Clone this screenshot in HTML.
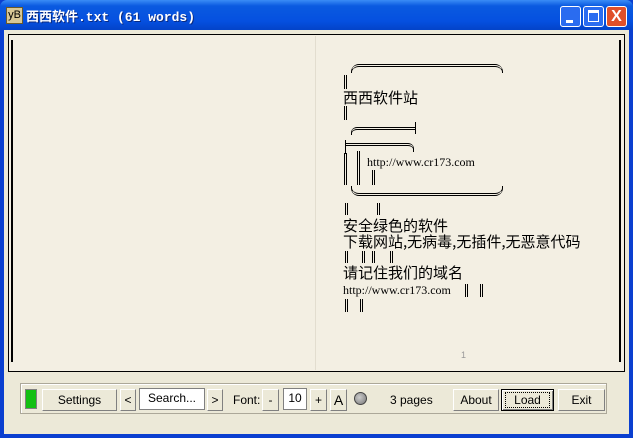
<!DOCTYPE html>
<html><head><meta charset="utf-8"><style>
*{margin:0;padding:0;box-sizing:border-box}
body{width:633px;height:438px;overflow:hidden;background:#0a3fd0;font-family:"Liberation Sans","Noto Sans CJK SC",sans-serif;position:relative}
.a{position:absolute}
.title{left:0;top:0;width:633px;height:30px;background:linear-gradient(#3a8cf6,#0a5ae0 20%,#0550e0 70%,#0343c8);border-radius:7px 7px 0 0}
.client{left:4px;top:30px;width:625px;height:404px;background:#ece9d8}
.book{left:8px;top:34px;width:617px;height:338px;border:1px solid #000;background:#f3efe3}
.cjk{font-family:"Noto Sans CJK SC","WenQuanYi Zen Hei",sans-serif;font-size:15px;line-height:15px;color:#000}
.ser{font-family:"Liberation Serif",serif;font-size:12px;color:#000}
.v{position:absolute;width:3px;border-left:1px solid #000;border-right:1px solid #000}
.btn{position:absolute;background:#ece9d8;border:1px solid;border-color:#fff #808080 #808080 #fff;font-size:12px;text-align:center;line-height:20px;height:22px;color:#000}
</style></head><body>
<div class="a title"></div>
<div class="a" style="left:6px;top:7px;width:17px;height:17px;background:#d8c896;border:1px solid #6b5a2a;font-size:11px;line-height:15px;text-align:center;color:#000">yB</div>
<div class="a" style="left:26px;top:6px;color:#fff;font-family:'Liberation Mono','Noto Sans CJK SC',monospace;font-weight:bold;font-size:13px;text-shadow:1px 1px #0a2a80">西西软件.txt (61 words)</div>
<div class="a" style="left:560px;top:6px;width:21px;height:21px;background:#2a6cf0;border:1px solid #fff;border-radius:3px"><div class="a" style="left:5px;top:13px;width:7px;height:3px;background:#fff"></div></div>
<div class="a" style="left:583px;top:6px;width:21px;height:21px;background:#2a6cf0;border:1px solid #fff;border-radius:3px"><div class="a" style="left:4px;top:3px;width:11px;height:12px;border:1px solid #fff;border-top-width:3px"></div></div>
<div class="a" style="left:606px;top:6px;width:21px;height:21px;background:#e0502a;border:1px solid #fff;border-radius:3px;color:#fff;font-weight:bold;font-size:16px;line-height:19px;text-align:center">X</div>
<div class="a client"></div>
<div class="a book"></div>
<div class="a" style="left:11px;top:40px;width:2px;height:322px;background:#000"></div>
<div class="a" style="left:619px;top:40px;width:2px;height:322px;background:#000"></div>
<div class="a" style="left:315px;top:36px;width:1px;height:334px;background:#e2ddcf"></div>
<!-- top box: top line with curls -->
<div class="a" style="left:351px;top:64px;width:152px;height:9px;border-top:3px double #000;border-left:1px solid #000;border-right:1px solid #000;border-radius:8px 8px 0 0"></div>
<div class="v" style="left:344px;top:75px;height:14px"></div>
<div class="a cjk" style="left:343px;top:90px">西西软件站</div>
<div class="v" style="left:344px;top:106px;height:14px"></div>
<div class="a" style="left:351px;top:127px;width:65px;height:8px;border-top:3px double #000;border-left:1px solid #000;border-radius:6px 0 0 0"></div>
<div class="a" style="left:415px;top:122px;width:1px;height:12px;background:#000"></div>
<div class="a" style="left:345px;top:140px;width:1px;height:14px;background:#000"></div>
<div class="a" style="left:346px;top:143px;width:68px;height:9px;border-top:3px double #000;border-right:1px solid #000;border-radius:0 6px 0 0"></div>
<div class="v" style="left:344px;top:153px;height:32px"></div>
<div class="v" style="left:357px;top:151px;height:34px"></div>
<div class="v" style="left:372px;top:170px;height:15px"></div>
<div class="a ser" style="left:367px;top:155px">http://www.cr173.com</div>
<div class="a" style="left:351px;top:186px;width:152px;height:10px;border-bottom:3px double #000;border-left:1px solid #000;border-right:1px solid #000;border-radius:0 0 8px 8px"></div>
<div class="v" style="left:345px;top:203px;height:12px"></div>
<div class="v" style="left:377px;top:203px;height:12px"></div>
<div class="a cjk" style="left:343px;top:218px">安全绿色的软件</div>
<div class="a cjk" style="left:343px;top:234px;white-space:nowrap">下载网站,无病毒,无插件,无恶意代码</div>
<div class="v" style="left:345px;top:251px;height:12px"></div>
<div class="v" style="left:362px;top:251px;height:12px"></div>
<div class="v" style="left:372px;top:251px;height:12px"></div>
<div class="v" style="left:390px;top:251px;height:12px"></div>
<div class="a cjk" style="left:343px;top:265px">请记住我们的域名</div>
<div class="a ser" style="left:343px;top:283px">http://www.cr173.com</div>
<div class="v" style="left:465px;top:284px;height:13px"></div>
<div class="v" style="left:480px;top:284px;height:13px"></div>
<div class="v" style="left:345px;top:299px;height:13px"></div>
<div class="v" style="left:360px;top:299px;height:13px"></div>
<div class="a" style="left:461px;top:350px;font-size:9px;color:#999">1</div>
<!-- toolbar -->
<div class="a" style="left:20px;top:383px;width:587px;height:31px;border:1px solid #aca899;box-shadow:inset 1px 1px #fff"></div>
<div class="a" style="left:25px;top:389px;width:12px;height:20px;background:#13c013;border:1px solid #808080"></div>
<div class="btn" style="left:42px;top:389px;width:75px">Settings</div>
<div class="btn" style="left:120px;top:389px;width:16px">&lt;</div>
<div class="a" style="left:139px;top:388px;width:66px;height:22px;background:#fff;border:1px solid #808080;font-size:12px;text-align:center;line-height:18px">Search...</div>
<div class="btn" style="left:207px;top:389px;width:16px">&gt;</div>
<div class="a" style="left:233px;top:393px;font-size:12px">Font:</div>
<div class="btn" style="left:262px;top:389px;width:17px">-</div>
<div class="a" style="left:283px;top:388px;width:24px;height:22px;background:#fff;border:1px solid #808080;font-size:12px;text-align:center;line-height:18px">10</div>
<div class="btn" style="left:310px;top:389px;width:17px">+</div>
<div class="btn" style="left:330px;top:389px;width:17px;font-size:14px">A</div>
<div class="a" style="left:354px;top:392px;width:13px;height:13px;border-radius:50%;background:radial-gradient(circle at 40% 40%,#ccc,#777);border:1px solid #444"></div>
<div class="a" style="left:390px;top:393px;font-size:12px">3 pages</div>
<div class="btn" style="left:453px;top:389px;width:46px">About</div>
<div class="btn" style="left:501px;top:389px;width:53px;border:1px solid #000;box-shadow:inset 1px 1px #fff,inset -1px -1px #808080"><span style="border:1px dotted #000;padding:0 8px">Load</span></div>
<div class="btn" style="left:558px;top:389px;width:47px">Exit</div>
</body></html>
